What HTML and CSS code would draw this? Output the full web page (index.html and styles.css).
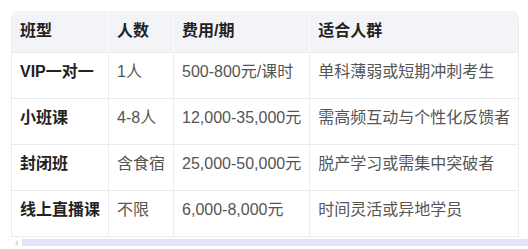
FILE: index.html
```html
<!DOCTYPE html>
<html lang="zh-CN">
<head>
<meta charset="utf-8">
<title>班型费用</title>
<link rel="stylesheet" href="styles.css">
</head>
<body>
<div class="scroller">
  <table class="plans">
    <thead>
      <tr><th>班型</th><th>人数</th><th>费用/期</th><th>适合人群</th></tr>
    </thead>
    <tbody>
      <tr><td class="name">VIP一对一</td><td>1人</td><td>500-800元/课时</td><td>单科薄弱或短期冲刺考生</td></tr>
      <tr><td class="name">小班课</td><td>4-8人</td><td>12,000-35,000元</td><td>需高频互动与个性化反馈者</td></tr>
      <tr><td class="name">封闭班</td><td>含食宿</td><td>25,000-50,000元</td><td>脱产学习或需集中突破者</td></tr>
      <tr><td class="name">线上直播课</td><td>不限</td><td>6,000-8,000元</td><td>时间灵活或异地学员</td></tr>
    </tbody>
  </table>
  <div class="scrollbar"><span class="arrow"></span><span class="thumb"></span></div>
</div>
</body>
</html>
```
FILE: styles.css
```css
html, body {
  margin: 0;
  background: #ffffff;
}
body {
  padding: 11px 0 0 11px;
  font-family: "Liberation Sans", "Noto Sans CJK SC", sans-serif;
  font-size: 16px;
  color: #555;
}
.scroller {
  display: flex;
  flex-direction: column;
  align-items: flex-start;
}
.plans {
  border-collapse: separate;
  border-spacing: 0;
}
.plans th,
.plans td {
  text-align: left;
  white-space: nowrap;
  line-height: 24px;
  padding: 0 8px;
  border-right: 1px solid #e9ebef;
  border-bottom: 1px solid #e9ebef;
}
.plans th:first-child,
.plans td:first-child {
  border-left: 1px solid #e9ebef;
}
.plans th {
  background: #f3f4f8;
  color: #222;
  font-weight: 700;
  padding-top: 8px;
  padding-bottom: 9px;
  border-right-color: #fafbfc;
}
.plans th:first-child {
  border-top-left-radius: 8px;
  border-left-color: #f0f1f4;
}
.plans th:last-child {
  border-top-right-radius: 8px;
  border-right-color: #e9ebef;
}
.plans td {
  padding-top: 7px;
  padding-bottom: 14px;
}
.plans td.name {
  color: #222;
  font-weight: 700;
}
.scrollbar {
  align-self: stretch;
  display: flex;
  align-items: center;
  height: 7px;
  margin-top: 2px;
}
.arrow {
  width: 0;
  height: 0;
  margin-left: 4px;
  border-top: 3px solid transparent;
  border-bottom: 3px solid transparent;
  border-right: 3px solid #d4d4dc;
}
.thumb {
  flex: 1;
  height: 7px;
  margin-left: 4px;
  background: #e2e2fb;
}
```
